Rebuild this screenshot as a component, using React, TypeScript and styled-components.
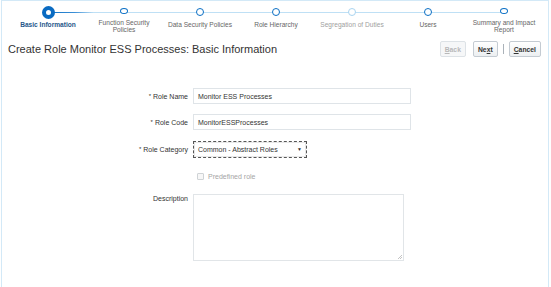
import React from "react";
import styled, { createGlobalStyle } from "styled-components";

const GlobalStyle = createGlobalStyle`
  html, body {
    margin: 0;
    padding: 0;
    background: #fff;
  }
  body {
    font-family: "Liberation Sans", Arial, sans-serif;
    color: #333;
  }
`;

const Panel = styled.div`
  box-sizing: border-box;
  width: 548px;
  height: 287px;
  margin-left: 1px;
  border: 1px solid #d3e9f7;
  border-bottom: none;
  overflow: hidden;
`;

const Train = styled.div`
  display: flex;
  padding: 5px 0 0 8px;
  height: 32px;
  box-sizing: border-box;
`;

const Stop = styled.div<{ $last?: boolean; $active?: boolean }>`
  position: relative;
  width: 76px;
  display: flex;
  flex-direction: column;
  align-items: center;
  &::after {
    content: "";
    display: ${({ $last }) => ($last ? "none" : "block")};
    position: absolute;
    top: 6px;
    left: 38px;
    width: 76px;
    height: 1px;
    background: ${({ $active }) =>
      $active
        ? "linear-gradient(to right, #0b6fc4 0%, #3b8fd6 35%, #bfe0f5 60%)"
        : "#bfe0f5"};
  }
`;

type StopState = "current" | "normal" | "faded";

const Dot = styled.div<{ $variant: StopState }>`
  position: relative;
  z-index: 1;
  box-sizing: border-box;
  background: #fff;
  border-radius: 50%;
  ${({ $variant }) =>
    $variant === "current"
      ? `
    width: 13px;
    height: 13px;
    margin-top: 0;
    margin-bottom: -2px;
    border: 4px solid #0a6bc2;
  `
      : `
    width: 8px;
    height: 8px;
    margin-top: 2px;
    margin-bottom: 1px;
    border: 1.5px solid ${$variant === "faded" ? "#a9d4f0" : "#0b6fc4"};
  `}
`;

const StopLabel = styled.div<{ $variant: StopState }>`
  margin-top: 4px;
  font-size: 6.6px;
  line-height: 7px;
  text-align: center;
  white-space: nowrap;
  color: ${({ $variant }) =>
    $variant === "current" ? "#27588a" : $variant === "faded" ? "#a0a0a0" : "#666"};
  font-weight: ${({ $variant }) => ($variant === "current" ? 700 : 400)};
`;

const Header = styled.div`
  display: flex;
  align-items: center;
  justify-content: space-between;
  padding: 6px 7px 0 6px;
  height: 20px;
`;

const Title = styled.h1`
  margin: 0;
  font-size: 11px;
  font-weight: 400;
  color: #333;
`;

const Actions = styled.div`
  display: flex;
  align-items: center;
`;

const Button = styled.button<{ $disabled?: boolean; $gap?: number }>`
  font-family: "Liberation Sans", Arial, sans-serif;
  font-size: 6.8px;
  font-weight: 700;
  height: 16px;
  padding: 0 4px;
  margin-left: ${({ $gap }) => $gap ?? 0}px;
  border-radius: 2px;
  border: 1px solid ${({ $disabled }) => ($disabled ? "#dde2e6" : "#c4cbd2")};
  background: ${({ $disabled }) =>
    $disabled ? "#f6f7f8" : "linear-gradient(#ffffff, #eceff1)"};
  color: ${({ $disabled }) => ($disabled ? "#b8b8b8" : "#333")};
  cursor: default;
  & u {
    text-decoration: underline;
  }
`;

const Divider = styled.span`
  width: 1px;
  height: 10px;
  margin-left: 5px;
  background: #aab2b9;
`;

const Form = styled.div`
  display: grid;
  grid-template-columns: 186px 218px;
  grid-template-rows: 26px 26px 28px 26px auto;
  column-gap: 5px;
  margin-top: 24px;
  align-items: center;
`;

const Label = styled.label<{ $top?: boolean }>`
  justify-self: end;
  align-self: ${({ $top }) => ($top ? "start" : "center")};
  margin-top: ${({ $top }) => ($top ? "6px" : "0")};
  font-size: 7px;
  color: #333;
  white-space: nowrap;
`;

const Req = styled.span`
  color: #333;
  font-size: 6px;
  vertical-align: top;
  margin-right: 2px;
`;

const TextInput = styled.div`
  box-sizing: border-box;
  height: 16px;
  border: 1px solid #dfe4e8;
  padding: 0 4px;
  display: flex;
  align-items: center;
  font-size: 7px;
  color: #333;
`;

const Select = styled.div`
  box-sizing: border-box;
  width: 114px;
  height: 17px;
  border: 1px dashed #555;
  padding: 0 4px;
  display: flex;
  align-items: center;
  justify-content: space-between;
  font-size: 7px;
  color: #333;
  box-shadow: 0 0 0 1px #e8e8e8 inset;
`;

const Caret = styled.span`
  font-size: 5px;
  color: #333;
`;

const CheckRow = styled.div`
  display: flex;
  align-items: center;
  gap: 4px;
  padding-left: 4px;
  font-size: 7px;
  color: #a5a5a5;
`;

const Box = styled.span`
  box-sizing: border-box;
  width: 7px;
  height: 7px;
  border: 1px solid #cfd3d6;
  border-radius: 1px;
  background: #f7f7f7;
`;

const TextArea = styled.div`
  position: relative;
  box-sizing: border-box;
  width: 211px;
  height: 67px;
  margin-top: 5px;
  border: 1px solid #e1e5e8;
`;

const Grip = styled.svg`
  position: absolute;
  right: 1px;
  bottom: 1px;
`;

const stops: { label: React.ReactNode; state: StopState }[] = [
  { label: "Basic Information", state: "current" },
  { label: <>Function Security<br />Policies</>, state: "normal" },
  { label: "Data Security Policies", state: "normal" },
  { label: "Role Hierarchy", state: "normal" },
  { label: "Segregation of Duties", state: "faded" },
  { label: "Users", state: "normal" },
  { label: <>Summary and Impact<br />Report</>, state: "normal" },
];

export default function App() {
  return (
    <>
      <GlobalStyle />
      <Panel>
        <Train>
          {stops.map((s, i) => (
            <Stop key={i} $last={i === stops.length - 1} $active={i === 0}>
              <Dot $variant={s.state} />
              <StopLabel $variant={s.state}>{s.label}</StopLabel>
            </Stop>
          ))}
        </Train>
        <Header>
          <Title>Create Role Monitor ESS Processes: Basic Information</Title>
          <Actions>
            <Button $disabled><u>B</u>ack</Button>
            <Button $gap={7}>Ne<u>x</u>t</Button>
            <Divider />
            <Button $gap={5}><u>C</u>ancel</Button>
          </Actions>
        </Header>
        <Form>
          <Label><Req>*</Req>Role Name</Label>
          <TextInput>Monitor ESS Processes</TextInput>
          <Label><Req>*</Req>Role Code</Label>
          <TextInput>MonitorESSProcesses</TextInput>
          <Label><Req>*</Req>Role Category</Label>
          <Select>
            Common - Abstract Roles
            <Caret>▼</Caret>
          </Select>
          <span />
          <CheckRow>
            <Box />
            Predefined role
          </CheckRow>
          <Label $top>Description</Label>
          <TextArea>
            <Grip width="5" height="5" viewBox="0 0 5 5">
              <path d="M5 1 L1 5 M5 3 L3 5" stroke="#aaa" strokeWidth="0.7" />
            </Grip>
          </TextArea>
        </Form>
      </Panel>
    </>
  );
}
